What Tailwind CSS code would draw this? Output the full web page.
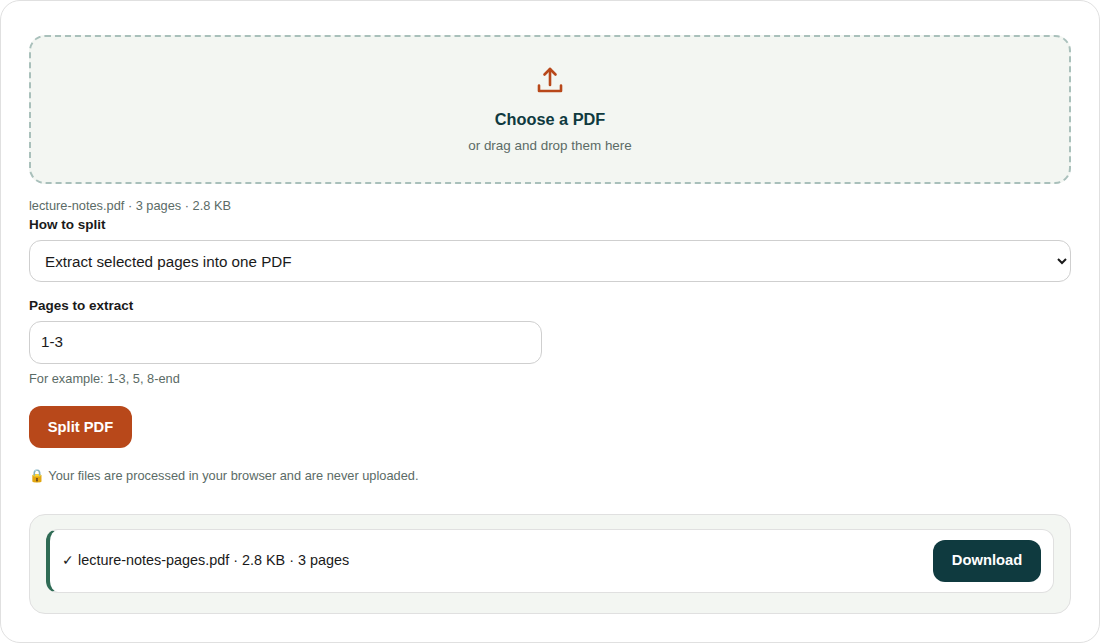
<!DOCTYPE html>
<html lang="en">

<head>
  <meta charset="UTF-8" />
  <meta name="viewport" content="width=device-width, initial-scale=1.0" />
  <title>Split PDF</title>
  <script src="https://cdn.jsdelivr.net/npm/@tailwindcss/browser@4"></script>
</head>

<body class="bg-white font-['Liberation_Sans',Arial,sans-serif] text-[#1a1a1a]">

  <main class="h-[643px] rounded-[20px] border border-[#e0e0e0] bg-white px-7 pt-[34px]">

    <!-- Dropzone -->
    <div class="flex h-[149px] flex-col items-center rounded-2xl border-2 border-dashed border-[#a9c0bb] bg-[#f3f6f2] pt-[29px]">
      <svg class="h-7 w-7 text-[#b8481a]" viewBox="0 0 28 28" fill="none" stroke="currentColor" stroke-width="2.6" stroke-linecap="round" stroke-linejoin="round">
        <path d="M14 19V3" />
        <path d="M8.5 8.500L14 3l5.500 5.500" />
        <path d="M3 19.500V25H25V19.500" />
      </svg>
      <div class="mt-[15px] text-[16.32px] leading-[20px] font-bold text-[#0f3a3f]">Choose a PDF</div>
      <div class="mt-[7px] text-[13.44px] leading-[20px] text-[#5b6b66]">or drag and drop them here</div>
    </div>

    <p class="mt-[13px] text-[12.8px] leading-[17px] text-[#5b6b66]">lecture-notes.pdf · 3 pages · 2.8 KB</p>

    <!-- Split mode -->
    <label class="mt-[2px] block text-[13.5px] leading-[17px] font-bold">How to split</label>
    <select class="mt-[7px] block h-[42px] w-full rounded-xl border border-[#cfcfcf] bg-white px-[11px] text-[15.2px]">
      <option>Extract selected pages into one PDF</option>
    </select>

    <!-- Page range -->
    <label class="mt-[15px] block text-[13.5px] leading-[17px] font-bold">Pages to extract</label>
    <input type="text" value="1-3" class="mt-[7px] block h-[43px] w-[513px] rounded-xl border border-[#cfcfcf] bg-white px-[11px] pb-[2px] text-[15.2px]" />
    <p class="mt-[6px] text-[12.8px] leading-[17px] text-[#5b6b66]">For example: 1-3, 5, 8-end</p>

    <button class="mt-[19px] block h-[42px] w-[103px] rounded-xl bg-[#b8481a] text-[14.72px] font-bold text-white">Split PDF</button>

    <p class="mt-[19px] text-[12.8px] leading-[17px] text-[#5b6b66]">🔒 Your files are processed in your browser and are never uploaded.</p>

    <!-- Results -->
    <section class="mt-[30px] h-[100px] rounded-2xl border border-[#e0e0e0] bg-[#f3f6f2] px-4 pt-[14px]">
      <div class="flex h-[64px] items-center justify-between rounded-xl border border-l-4 border-[#e0e0e0] border-l-[#2f6b55] bg-white pr-3 pl-3">
        <span class="pb-[2px] text-[14.4px] leading-[20px]">✓ lecture-notes-pages.pdf · 2.8 KB · 3 pages</span>
        <button class="h-[42px] w-[108px] rounded-xl bg-[#0f3a3f] pb-[2px] text-[14.72px] font-bold text-white">Download</button>
      </div>
    </section>

  </main>

</body>
</html>
